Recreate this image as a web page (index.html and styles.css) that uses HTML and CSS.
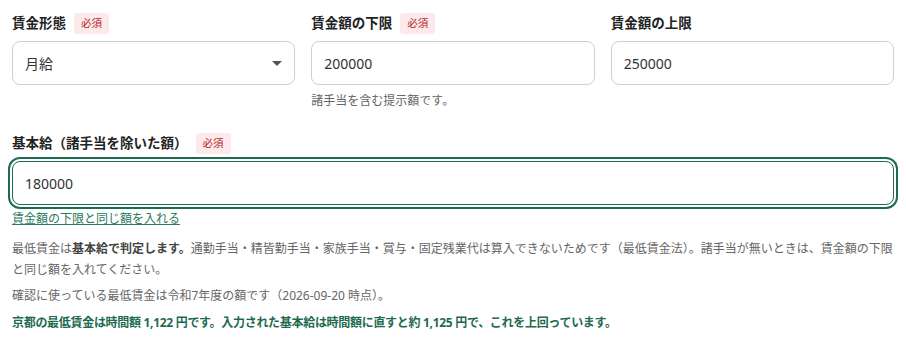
FILE: index.html
```html
<!DOCTYPE html>
<html lang="ja">
<head>
    <meta charset="UTF-8">
    <meta name="viewport" content="width=device-width, initial-scale=1.0">
    <title>賃金の入力</title>
    <link rel="stylesheet" href="styles.css">
</head>
<body>

<div class="form">
    <div class="row">
        <div class="field">
            <div class="label-row">
                <label for="wageType">賃金形態</label>
                <span class="badge">必須</span>
            </div>
            <div class="select-wrap">
                <select id="wageType">
                    <option>月給</option>
                    <option>日給</option>
                    <option>時給</option>
                </select>
            </div>
        </div>

        <div class="field">
            <div class="label-row">
                <label for="wageMin">賃金額の下限</label>
                <span class="badge">必須</span>
            </div>
            <input type="text" id="wageMin" value="200000">
            <div class="hint">諸手当を含む提示額です。</div>
        </div>

        <div class="field">
            <div class="label-row">
                <label for="wageMax">賃金額の上限</label>
            </div>
            <input type="text" id="wageMax" value="250000">
        </div>
    </div>

    <div class="field base">
        <div class="label-row">
            <label for="basePay">基本給（諸手当を除いた額）</label>
            <span class="badge">必須</span>
        </div>
        <input type="text" id="basePay" class="focused" value="180000">
        <a href="#" class="copy-link" onclick="copyMin(); return false;">賃金額の下限と同じ額を入れる</a>

        <p class="note">最低賃金は<strong>基本給で判定します。</strong>通勤手当・精皆勤手当・家族手当・賞与・固定残業代は算入できないためです（最低賃金法）。諸手当が無いときは、賃金額の下限と同じ額を入れてください。</p>
        <p class="note date">確認に使っている最低賃金は令和7年度の額です（2026-09-20 時点）。</p>

        <p class="result" id="result">京都の最低賃金は時間額 1,122 円です。入力された基本給は時間額に直すと約 1,125 円で、これを上回っています。</p>
    </div>
</div>

<script>
    function copyMin() {
        document.getElementById('basePay').value = document.getElementById('wageMin').value;
    }
</script>

</body>
</html>
```

FILE: styles.css
```css
body {
    font-family: "Noto Sans", "Noto Sans CJK JP", sans-serif;
    background-color: #ffffff;
    color: #222;
    margin: 0;
    padding: 0;
}

.form {
    padding: 12px;
}

.row {
    display: grid;
    grid-template-columns: repeat(3, 1fr);
    gap: 16px;
}

.field {
    display: flex;
    flex-direction: column;
}

.label-row {
    display: flex;
    align-items: center;
    height: 22px;
    margin-bottom: 7px;
}

.label-row label {
    font-size: 13.5px;
    font-weight: bold;
    line-height: 22px;
    color: #222;
}

.badge {
    margin-left: 8px;
    padding: 0 7px;
    height: 21px;
    line-height: 21px;
    font-size: 10.5px;
    color: #b3262d;
    background-color: #fde9e9;
    border-radius: 3px;
}

.field input,
.field select {
    box-sizing: border-box;
    width: 100%;
    height: 44px;
    padding: 0 12px;
    font-family: inherit;
    font-size: 14px;
    color: #333;
    background-color: #fff;
    border: 1px solid #cfcfcf;
    border-radius: 8px;
    outline: none;
}

.select-wrap {
    position: relative;
}

.field select {
    appearance: none;
    -webkit-appearance: none;
}

.select-wrap::after {
    content: "";
    position: absolute;
    right: 13px;
    top: 20px;
    border-left: 5px solid transparent;
    border-right: 5px solid transparent;
    border-top: 5px solid #555;
    pointer-events: none;
}

.hint {
    margin-top: 7px;
    font-size: 12px;
    line-height: 18px;
    color: #666;
}

.base {
    margin-top: 22px;
}

.field input.focused {
    border-color: #1d6b52;
    box-shadow: 0 0 0 2px #fff, 0 0 0 4px #1d6b52;
}

.copy-link {
    align-self: flex-start;
    margin-top: 5px;
    font-size: 12px;
    line-height: 18px;
    color: #2a7a5d;
}

.note {
    margin: 10px 0 0;
    font-size: 12px;
    line-height: 21px;
    color: #666;
}

.note strong {
    color: #444;
}

.note.date {
    margin-top: 5px;
}

.result {
    margin: 8px 0 0;
    font-size: 12px;
    font-weight: bold;
    line-height: 18px;
    letter-spacing: -0.3px;
    color: #1d6b4f;
}
```
